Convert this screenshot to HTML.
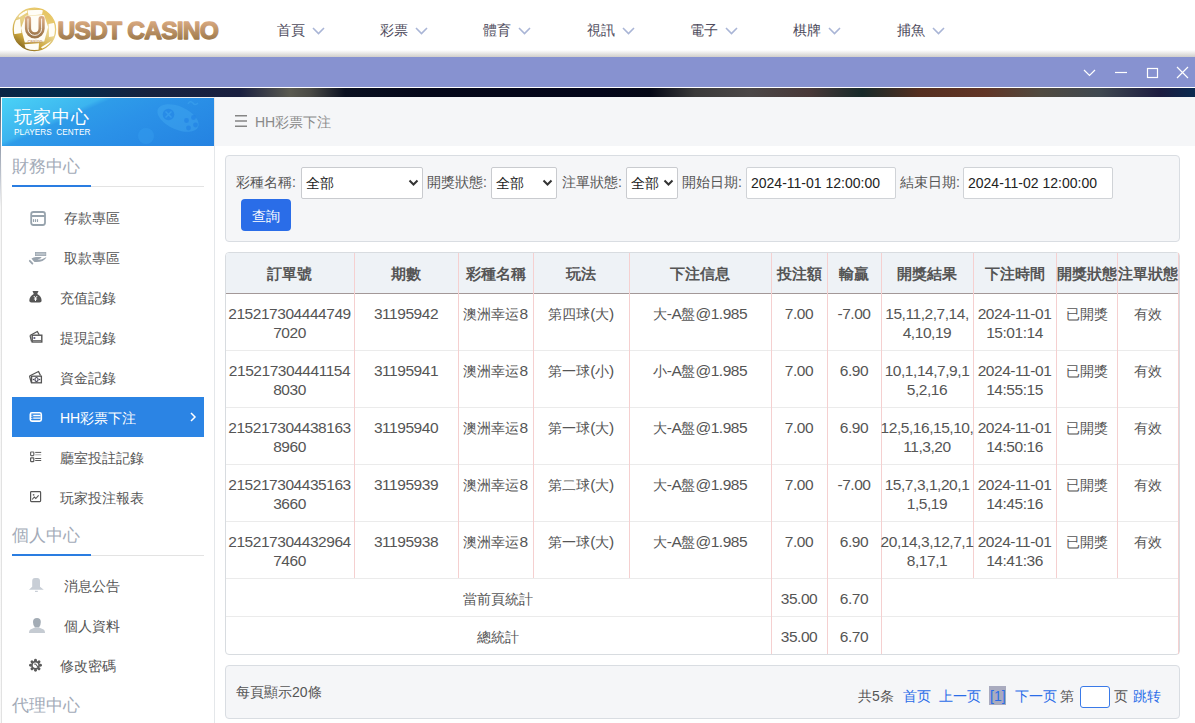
<!DOCTYPE html><html><head><meta charset="utf-8"><style>
*{box-sizing:border-box;margin:0;padding:0}
html,body{width:1195px;height:723px;overflow:hidden;background:#fff;font-family:"Liberation Sans",sans-serif;color:#555}
.abs{position:absolute}
#hdr{position:absolute;left:0;top:0;width:1195px;height:57px;background:linear-gradient(to bottom,#fff 0,#fff 50px,#d0cecb 57px)}
.nav{position:absolute;top:22px;font-size:14px;color:#4e4b5c;line-height:16px;white-space:nowrap}
.nav svg{position:absolute;left:35px;top:5px}
#purple{position:absolute;left:0;top:57px;width:1195px;height:30px;background:#8792d0}
#wline{position:absolute;left:0;top:87px;width:1195px;height:1px;background:#fff}
#dark{position:absolute;left:0;top:88px;width:1195px;height:9px;
 background:linear-gradient(to right,#0b2444 0px,#03294b 60px,#16223f 150px,#1a2040 240px,#5a5a50 290px,#4a4a45 310px,#0a1020 345px,#05081a 420px,#04061a 600px,#050816 650px,#3a3a3a 695px,#4b4747 750px,#483838 810px,#182a2a 862px,#552f20 920px,#613526 985px,#504a40 1040px,#3f4850 1100px,#1c1c40 1160px,#0a2a50 1195px)}
#side{position:absolute;left:1px;top:97px;width:214px;height:626px;background:#fff;border-left:1px solid #e2e2e2;border-right:1px solid #e4e7ea;border-top:1px solid #f0f0f0}
#lcol{position:absolute;left:0;top:97px;width:1px;height:626px;background:linear-gradient(to bottom,#4a5566 0,#8a93a3 40px,#c0c6d0 80px,#f6f6f6 110px,#f8f8f8 100%)}
#lwh{position:absolute;left:1px;top:97px;width:1px;height:103px;background:linear-gradient(to bottom,#fff 0,#fff 60px,#e2e2e2 103px)}
#sideh{position:absolute;left:2px;top:98px;width:212px;height:48px;background:linear-gradient(156deg,#4ad2f6 0%,#3cb4ef 31%,#2e9ce9 35%,#2b92e8 55%,#2482e1 100%);overflow:hidden}
#crumb{position:absolute;left:215px;top:97px;width:980px;height:49px;background:#f5f6f8}
.stitle{position:absolute;left:12px;font-size:17px;color:#a3abb8;line-height:20px;white-space:nowrap}
.sline{position:absolute;left:12px;width:192px;height:1px;background:#e3e3e3}
.sline i{position:absolute;left:0;top:-1px;width:79px;height:2px;background:#2a7de1}
.item{position:absolute;font-size:14px;color:#555;line-height:16px;white-space:nowrap}
.ico{position:absolute}
#active{position:absolute;left:12px;top:397px;width:192px;height:40px;background:#2b84e4}
.box{position:absolute;left:225px;width:955px;background:#f5f6f8;border:1px solid #d9dde2;border-radius:4px}
.lbl{position:absolute;top:174px;font-size:14px;color:#555;line-height:16px;white-space:nowrap}
.sel{position:absolute;top:167px;height:32px;background:#fff;border:1px solid #c9cbcf;border-radius:2px}
.sel span{position:absolute;left:4px;top:7px;font-size:14px;color:#222;line-height:16px}
.sel svg{position:absolute;top:11px}
.inp{position:absolute;top:167px;width:150px;height:32px;background:#fff;border:1px solid #d0d3d7;border-radius:2px;font-size:14px;color:#222;line-height:16px;padding:7px 0 0 4px;white-space:nowrap}
#btn{position:absolute;left:241px;top:199px;width:50px;height:32px;background:#2a6de8;border-radius:4px;color:#fff;font-size:14px;line-height:16px;padding:8.5px 0 0 11px}
#tbl{position:absolute;left:225px;top:252px;width:955px;height:403px;border:1px solid #d8dce0;border-radius:4px;background:#fff;overflow:hidden}
.hl{position:absolute;height:1px}
.vl{position:absolute;width:1px;background:#f5d0d0}
.th{position:absolute;top:265px;font-size:15px;font-weight:bold;color:#555;line-height:17px;text-align:center;white-space:nowrap}
.td{position:absolute;font-size:15.5px;letter-spacing:-0.45px;color:#555;line-height:19px;text-align:center;white-space:nowrap}
.k{font-size:14px;letter-spacing:0}
.pg{position:absolute;top:688px;font-size:14px;line-height:16px;white-space:nowrap;color:#555}
.bl{color:#2a6de8}
</style></head><body>
<div id="hdr"></div>
<svg class="abs" style="left:0;top:0" width="240" height="57" viewBox="0 0 240 57">
<defs><linearGradient id="gold" x1="0.8" y1="0" x2="0.2" y2="1"><stop offset="0" stop-color="#e6c25a"/><stop offset="0.45" stop-color="#e8d28a"/><stop offset="0.75" stop-color="#c9a43c"/><stop offset="1" stop-color="#7a5c1a"/></linearGradient>
<linearGradient id="tan" x1="0" y1="0" x2="0" y2="1"><stop offset="0" stop-color="#d8a982"/><stop offset="1" stop-color="#9e774a"/></linearGradient>
<linearGradient id="tan2" x1="0" y1="22" x2="0" y2="40" gradientUnits="userSpaceOnUse"><stop offset="0" stop-color="#d6a77e"/><stop offset="1" stop-color="#9d794b"/></linearGradient></defs>
<circle cx="34.4" cy="29.4" r="21.2" fill="url(#gold)"/>
<g fill="#fffdf6">
<path d="M27.5 10.2 L43 9.8 L42 14.5 L28.5 15.5 Z"/>
<path d="M18 14.5 L26.8 10.2 L27.3 12.6 L19 17.5 Z"/>
<path d="M13.4 21 L20 19 L21.5 33 L13.8 34.2 Q12.8 27 13.4 21 Z"/>
<path d="M48.5 24 L54.8 22.8 Q56.2 29 55.4 36 L49 37 Z"/>
<path d="M24.5 44.2 L39 43.2 L38.5 50.6 Q32 51.3 26 50 Z"/>
<path d="M41 47.2 L51.8 40.8 L50.5 45 L43 49.6 Z"/>
<path d="M25.8 15.8 L44 15 L48.2 27 L44.2 41.5 L24.8 42.5 L21 28 Z"/>
</g>
<circle cx="34.4" cy="29.4" r="21.2" fill="none" stroke="url(#gold)" stroke-width="1.3"/>
<path d="M28 19 V28.6 a6.8 6.8 0 0 0 13.6 0 V19" fill="none" stroke="url(#tan)" stroke-width="6.2" stroke-linecap="round"/>
<path d="M28 19 V28.6 a6.8 6.8 0 0 0 13.6 0 V19" fill="none" stroke="#fff" stroke-width="1" stroke-linecap="round" opacity="0.9"/>
<text x="27.5" y="43.4" font-family="Liberation Sans" font-size="5.2" fill="#c09068">casino</text>
<text x="57.5" y="38.9" font-family="Liberation Sans" font-weight="bold" font-size="24.6" letter-spacing="-0.8" fill="url(#tan2)" stroke="url(#tan2)" stroke-width="1.3" stroke-linejoin="round">USDT CASINO</text>
</svg>
<div class="nav" style="left:277px">首頁<svg width="13" height="8" viewBox="0 0 13 8"><path d="M1 1 L6.5 6.5 L12 1" fill="none" stroke="#a9b5d6" stroke-width="1.6"/></svg></div>
<div class="nav" style="left:380px">彩票<svg width="13" height="8" viewBox="0 0 13 8"><path d="M1 1 L6.5 6.5 L12 1" fill="none" stroke="#a9b5d6" stroke-width="1.6"/></svg></div>
<div class="nav" style="left:483px">體育<svg width="13" height="8" viewBox="0 0 13 8"><path d="M1 1 L6.5 6.5 L12 1" fill="none" stroke="#a9b5d6" stroke-width="1.6"/></svg></div>
<div class="nav" style="left:587px">視訊<svg width="13" height="8" viewBox="0 0 13 8"><path d="M1 1 L6.5 6.5 L12 1" fill="none" stroke="#a9b5d6" stroke-width="1.6"/></svg></div>
<div class="nav" style="left:690px">電子<svg width="13" height="8" viewBox="0 0 13 8"><path d="M1 1 L6.5 6.5 L12 1" fill="none" stroke="#a9b5d6" stroke-width="1.6"/></svg></div>
<div class="nav" style="left:793px">棋牌<svg width="13" height="8" viewBox="0 0 13 8"><path d="M1 1 L6.5 6.5 L12 1" fill="none" stroke="#a9b5d6" stroke-width="1.6"/></svg></div>
<div class="nav" style="left:897px">捕魚<svg width="13" height="8" viewBox="0 0 13 8"><path d="M1 1 L6.5 6.5 L12 1" fill="none" stroke="#a9b5d6" stroke-width="1.6"/></svg></div>
<div id="purple"></div><div id="wline"></div><div id="dark"></div>
<svg class="abs" style="left:1080px;top:64px" width="115" height="18" viewBox="0 0 115 18">
<path d="M4 6 L9.5 11.5 L15 6" fill="none" stroke="#fff" stroke-width="1.2"/>
<path d="M35 8.5 H47" stroke="#fff" stroke-width="1.2"/>
<rect x="67.5" y="4.5" width="10" height="9" fill="none" stroke="#fff" stroke-width="1.2"/>
<path d="M97 3 L108 14 M108 3 L97 14" stroke="#fff" stroke-width="1.2"/>
</svg>
<div id="side"></div><div id="lcol"></div><div id="lwh"></div>
<div id="crumb"></div>
<div id="sideh">
<svg class="abs" style="left:0;top:0" width="212" height="48" viewBox="0 0 212 48">
<g opacity="0.42"><ellipse cx="176" cy="20" rx="22" ry="11.5" transform="rotate(24 176 20)" fill="#45acf2"/>
<path d="M186 6 Q188 2 191 5 Q193 8 196 5" fill="none" stroke="#45acf2" stroke-width="1.5"/></g>
<circle cx="166.5" cy="16.5" r="5.8" fill="#2284e6" opacity="0.7"/>
<path d="M163.5 13.5 L169.5 19.5 M169.5 13.5 L163.5 19.5" stroke="#3aa0ee" stroke-width="1.5" opacity="0.8"/>
<g fill="#2284e6" opacity="0.7"><circle cx="184.5" cy="22.5" r="2.4"/><circle cx="191.5" cy="19.5" r="2.4"/><circle cx="186.5" cy="30" r="2.4"/><circle cx="193.5" cy="27" r="2.4"/></g>
<circle cx="144" cy="38" r="8" fill="#3aa4f0" opacity="0.35"/>
</svg>
<div class="abs" style="left:12px;top:9px;font-size:18px;color:#fff;line-height:20px;letter-spacing:1px;white-space:nowrap">玩家中心</div>
<div class="abs" style="left:12px;top:29.5px;font-size:8.2px;color:#fff;line-height:9px;word-spacing:2px;letter-spacing:0.1px;white-space:nowrap">PLAYERS CENTER</div>
</div>
<div class="stitle" style="top:157px">財務中心</div><div class="sline" style="top:186px"><i></i></div>
<div class="stitle" style="top:526px">個人中心</div><div class="sline" style="top:555px"><i></i></div>
<div class="stitle" style="top:696px">代理中心</div>
<div id="active"></div>
<div class="item" style="left:64px;top:210px;color:#555">存款專區</div>
<div class="item" style="left:64px;top:250px;color:#555">取款專區</div>
<div class="item" style="left:60px;top:290px;color:#555">充值記錄</div>
<div class="item" style="left:60px;top:330px;color:#555">提現記錄</div>
<div class="item" style="left:60px;top:370px;color:#555">資金記錄</div>
<div class="item" style="left:60px;top:410px;color:#fff">HH彩票下注</div>
<div class="item" style="left:60px;top:450px;color:#555">廳室投註記錄</div>
<div class="item" style="left:60px;top:490px;color:#555">玩家投注報表</div>
<div class="item" style="left:64px;top:578px;color:#555">消息公告</div>
<div class="item" style="left:64px;top:618px;color:#555">個人資料</div>
<div class="item" style="left:60px;top:658px;color:#555">修改密碼</div>
<svg class="ico" style="left:26px;top:207px" width="24" height="24" viewBox="0 0 24 24"><rect x="5.2" y="5" width="13.8" height="13" rx="2.2" fill="none" stroke="#97a3ad" stroke-width="1.8"/><path d="M5 9 H19" stroke="#97a3ad" stroke-width="2"/><path d="M7.5 12.6 V14.4 M9.5 12.6 V14.4 M11.5 12.6 V14.4" stroke="#97a3ad" stroke-width="1.2" stroke-linecap="round"/></svg>
<svg class="ico" style="left:26px;top:247px" width="24" height="24" viewBox="0 0 24 24"><rect x="9.4" y="5.4" width="10.4" height="3.2" fill="#b9c1c8" stroke="#9aa4ae" stroke-width="0.8"/><path d="M5.5 11.5 Q7.5 10 10 10 H15.5 Q15 12 11.5 12.2 Q14 13 16.5 12 L20.5 10 Q19.5 12.8 16.5 14 Q13.5 15.3 8.5 15 L7 13.5 Z" fill="#9aa4ae"/><path d="M3.8 13.8 L6.4 16.6" stroke="#9aa4ae" stroke-width="1.8" stroke-linecap="round"/></svg>
<svg class="ico" style="left:24px;top:286px" width="24" height="24" viewBox="0 0 24 24"><path d="M8.5 5 H14.5 L13.2 8 Q17.5 10 17.6 14.5 Q17.8 16.6 15.5 16.6 H7.5 Q5.2 16.6 5.3 14.5 Q5.5 10 9.8 8 Z" fill="#555"/><path d="M9.8 10 L11.5 12 L13.2 10 M11.5 12 V15 M9.9 13 H13.1" stroke="#fff" stroke-width="1" fill="none"/></svg>
<svg class="ico" style="left:24px;top:325px" width="24" height="24" viewBox="0 0 24 24"><path d="M6 10.5 L13.3 6.5 L15.2 9.8" fill="none" stroke="#555" stroke-width="1.3" stroke-linejoin="round"/><path d="M6 10.5 L7.5 16.5" stroke="#555" stroke-width="1.2"/><rect x="8.2" y="10.2" width="9.6" height="6.8" fill="none" stroke="#555" stroke-width="1.4"/><path d="M9 15.5 H17" stroke="#777" stroke-width="1"/><rect x="9.5" y="12" width="1.8" height="2" fill="#668"/></svg>
<svg class="ico" style="left:24px;top:365px" width="24" height="24" viewBox="0 0 24 24"><path d="M5.5 11 L14.5 6.5 L16.5 10.5" fill="none" stroke="#555" stroke-width="1.3" stroke-linejoin="round"/><path d="M5.5 11 L7.3 17.5" stroke="#555" stroke-width="1.2"/><rect x="7.6" y="11.2" width="9.8" height="6.6" fill="none" stroke="#555" stroke-width="1.3"/><ellipse cx="12.5" cy="14.5" rx="1.6" ry="2" fill="none" stroke="#445" stroke-width="1.2"/><circle cx="9.4" cy="14.5" r="0.7" fill="#445"/><circle cx="15.6" cy="14.5" r="0.7" fill="#445"/></svg>
<svg class="ico" style="left:24px;top:405px" width="24" height="24" viewBox="0 0 24 24"><rect x="6.3" y="7.8" width="11" height="8.3" rx="1.6" fill="none" stroke="#fff" stroke-width="1.6"/><path d="M9.2 10.5 H16.5 M9.2 13.2 H16.5" stroke="#fff" stroke-width="1.3"/><path d="M7.8 9.5 V15" stroke="#e8f0ff" stroke-width="1.2" stroke-dasharray="1 0.8"/></svg>
<svg class="abs" style="left:189.3px;top:412.2px" width="8" height="10" viewBox="0 0 8 10"><path d="M2 1 L6 5 L2 9" fill="none" stroke="#fff" stroke-width="1.5"/></svg>
<svg class="ico" style="left:24px;top:445px" width="24" height="24" viewBox="0 0 24 24"><rect x="6.6" y="7" width="3.2" height="3.6" rx="0.5" fill="none" stroke="#666" stroke-width="1.2"/><rect x="6.6" y="12.8" width="3.2" height="3.8" rx="0.5" fill="none" stroke="#5a5a5a" stroke-width="1.2"/><path d="M11.2 7.4 H17.2 M11.2 13.5 H17.2 M11.2 15.5 H17.2" stroke="#5a5a5a" stroke-width="1"/><path d="M11.2 9.8 H17.2" stroke="#aaa" stroke-width="1"/></svg>
<svg class="ico" style="left:24px;top:485px" width="24" height="24" viewBox="0 0 24 24"><rect x="6.6" y="6.6" width="10" height="10" rx="0.8" fill="none" stroke="#555" stroke-width="1.2"/><path d="M8.2 14.5 L10.3 12 L11.8 13.5 L14.6 10.3" fill="none" stroke="#555" stroke-width="1.1"/><circle cx="9.6" cy="9.8" r="0.9" fill="#666"/></svg>
<svg class="ico" style="left:24px;top:574px" width="26" height="24" viewBox="0 0 26 24"><path d="M8.2 7 Q8.2 4 11 4 H13.2 Q16 4 16 7 V12.8 L19.8 15.8 H5 L8.2 12.8 Z" fill="#c8ced6"/><rect x="11" y="16.8" width="2.8" height="1.2" fill="#c8ced6"/></svg>
<svg class="ico" style="left:24px;top:614px" width="26" height="24" viewBox="0 0 26 24"><path d="M9 8 Q9 4 13 4 Q16.8 4 16.8 8 Q16.8 12 15 13.6 H11 Q9 12 9 8 Z" fill="#a3acb5"/><path d="M5 19 Q5 15.5 7.5 15 L11 13.6 H15 L18.5 15 Q21 15.5 21 19 Z" fill="#c5cbd2"/></svg>
<svg class="ico" style="left:24px;top:654px" width="24" height="24" viewBox="0 0 24 24"><g fill="#5a5a5a"><g id="tth"><circle cx="11.5" cy="6.3" r="1.45"/><circle cx="11.5" cy="16.3" r="1.45"/></g><use href="#tth" transform="rotate(45 11.5 11.3)"/><use href="#tth" transform="rotate(90 11.5 11.3)"/><use href="#tth" transform="rotate(135 11.5 11.3)"/></g><circle cx="11.5" cy="11.3" r="3.6" fill="#fff" stroke="#5a5a5a" stroke-width="1.7"/><path d="M10.2 10.3 Q11.6 9.6 12.3 10.8 L14 13.3" stroke="#5a5a5a" stroke-width="1.1" fill="none"/></svg>
<svg class="abs" style="left:235px;top:114px" width="12" height="13" viewBox="0 0 12 13"><path d="M0 1.7 H12 M0 7 H12 M0 12.2 H12" stroke="#858585" stroke-width="1.6"/></svg>
<div class="abs" style="left:255px;top:114px;font-size:14px;color:#8a8a8a;line-height:16px;white-space:nowrap">HH彩票下注</div>
<div class="box" style="top:155px;height:87px"></div>
<div class="lbl" style="left:236px">彩種名稱:</div>
<div class="sel" style="left:301px;width:122px"><span>全部</span><svg style="left:106px" width="11" height="8" viewBox="0 0 11 8"><path d="M1.5 1.5 L5.5 5.5 L9.5 1.5" fill="none" stroke="#333" stroke-width="2"/></svg></div>
<div class="lbl" style="left:427px">開獎狀態:</div>
<div class="sel" style="left:491px;width:66px"><span>全部</span><svg style="left:50px" width="11" height="8" viewBox="0 0 11 8"><path d="M1.5 1.5 L5.5 5.5 L9.5 1.5" fill="none" stroke="#333" stroke-width="2"/></svg></div>
<div class="lbl" style="left:562px">注單狀態:</div>
<div class="sel" style="left:626px;width:52px"><span>全部</span><svg style="left:36px" width="11" height="8" viewBox="0 0 11 8"><path d="M1.5 1.5 L5.5 5.5 L9.5 1.5" fill="none" stroke="#333" stroke-width="2"/></svg></div>
<div class="lbl" style="left:682px">開始日期:</div>
<div class="inp" style="left:746px">2024-11-01 12:00:00</div>
<div class="lbl" style="left:900px">結束日期:</div>
<div class="inp" style="left:963px">2024-11-02 12:00:00</div>
<div id="btn">查詢</div>
<div id="tbl"></div>
<div class="abs" style="left:226px;top:253px;width:953px;height:40px;background:#eef2f6;border-radius:3px 3px 0 0"></div>
<div class="hl" style="left:226px;top:293px;width:953px;background:#a39898"></div>
<div class="hl" style="left:226px;top:350px;width:952px;background:#ebebeb"></div>
<div class="hl" style="left:226px;top:407px;width:952px;background:#ebebeb"></div>
<div class="hl" style="left:226px;top:464px;width:952px;background:#ebebeb"></div>
<div class="hl" style="left:226px;top:521px;width:952px;background:#ebebeb"></div>
<div class="hl" style="left:226px;top:578px;width:952px;background:#ebebeb"></div>
<div class="hl" style="left:226px;top:616px;width:952px;background:#ebebeb"></div>
<div class="vl" style="left:354px;top:253px;height:325px"></div>
<div class="vl" style="left:458px;top:253px;height:325px"></div>
<div class="vl" style="left:533px;top:253px;height:325px"></div>
<div class="vl" style="left:629px;top:253px;height:325px"></div>
<div class="vl" style="left:771px;top:253px;height:401px"></div>
<div class="vl" style="left:827px;top:253px;height:401px"></div>
<div class="vl" style="left:881px;top:253px;height:401px"></div>
<div class="vl" style="left:973px;top:253px;height:325px"></div>
<div class="vl" style="left:1056px;top:253px;height:325px"></div>
<div class="vl" style="left:1117px;top:253px;height:325px"></div>
<div class="vl" style="left:1178px;top:253px;height:401px"></div>
<div class="th" style="left:215px;width:149px">訂單號</div>
<div class="th" style="left:344px;width:124px">期數</div>
<div class="th" style="left:448px;width:95px">彩種名稱</div>
<div class="th" style="left:523px;width:116px">玩法</div>
<div class="th" style="left:619px;width:162px">下注信息</div>
<div class="th" style="left:761px;width:76px">投注額</div>
<div class="th" style="left:817px;width:74px">輸贏</div>
<div class="th" style="left:871px;width:112px">開獎結果</div>
<div class="th" style="left:963px;width:103px">下注時間</div>
<div class="th" style="left:1046px;width:81px">開獎狀態</div>
<div class="th" style="left:1107px;width:82px">注單狀態</div>
<div class="td" style="left:215px;width:149px;top:304px">215217304444749<br>7020</div>
<div class="td" style="left:344px;width:124px;top:304px">31195942</div>
<div class="td" style="left:448px;width:95px;top:304px"><span class="k">澳洲幸运</span>8</div>
<div class="td" style="left:523px;width:116px;top:304px"><span class="k">第四球</span>(<span class="k">大</span>)</div>
<div class="td" style="left:619px;width:162px;top:304px"><span class="k">大</span>-A<span class="k">盤</span>@1.985</div>
<div class="td" style="left:761px;width:76px;top:304px">7.00</div>
<div class="td" style="left:817px;width:74px;top:304px">-7.00</div>
<div class="td" style="left:871px;width:112px;top:304px">15,11,2,7,14,<br>4,10,19</div>
<div class="td" style="left:963px;width:103px;top:304px">2024-11-01<br>15:01:14</div>
<div class="td" style="left:1046px;width:81px;top:304px"><span class="k">已開獎</span></div>
<div class="td" style="left:1107px;width:82px;top:304px"><span class="k">有效</span></div>
<div class="td" style="left:215px;width:149px;top:361px">215217304441154<br>8030</div>
<div class="td" style="left:344px;width:124px;top:361px">31195941</div>
<div class="td" style="left:448px;width:95px;top:361px"><span class="k">澳洲幸运</span>8</div>
<div class="td" style="left:523px;width:116px;top:361px"><span class="k">第一球</span>(<span class="k">小</span>)</div>
<div class="td" style="left:619px;width:162px;top:361px"><span class="k">小</span>-A<span class="k">盤</span>@1.985</div>
<div class="td" style="left:761px;width:76px;top:361px">7.00</div>
<div class="td" style="left:817px;width:74px;top:361px">6.90</div>
<div class="td" style="left:871px;width:112px;top:361px">10,1,14,7,9,1<br>5,2,16</div>
<div class="td" style="left:963px;width:103px;top:361px">2024-11-01<br>14:55:15</div>
<div class="td" style="left:1046px;width:81px;top:361px"><span class="k">已開獎</span></div>
<div class="td" style="left:1107px;width:82px;top:361px"><span class="k">有效</span></div>
<div class="td" style="left:215px;width:149px;top:418px">215217304438163<br>8960</div>
<div class="td" style="left:344px;width:124px;top:418px">31195940</div>
<div class="td" style="left:448px;width:95px;top:418px"><span class="k">澳洲幸运</span>8</div>
<div class="td" style="left:523px;width:116px;top:418px"><span class="k">第一球</span>(<span class="k">大</span>)</div>
<div class="td" style="left:619px;width:162px;top:418px"><span class="k">大</span>-A<span class="k">盤</span>@1.985</div>
<div class="td" style="left:761px;width:76px;top:418px">7.00</div>
<div class="td" style="left:817px;width:74px;top:418px">6.90</div>
<div class="td" style="left:871px;width:112px;top:418px">12,5,16,15,10,<br>11,3,20</div>
<div class="td" style="left:963px;width:103px;top:418px">2024-11-01<br>14:50:16</div>
<div class="td" style="left:1046px;width:81px;top:418px"><span class="k">已開獎</span></div>
<div class="td" style="left:1107px;width:82px;top:418px"><span class="k">有效</span></div>
<div class="td" style="left:215px;width:149px;top:475px">215217304435163<br>3660</div>
<div class="td" style="left:344px;width:124px;top:475px">31195939</div>
<div class="td" style="left:448px;width:95px;top:475px"><span class="k">澳洲幸运</span>8</div>
<div class="td" style="left:523px;width:116px;top:475px"><span class="k">第二球</span>(<span class="k">大</span>)</div>
<div class="td" style="left:619px;width:162px;top:475px"><span class="k">大</span>-A<span class="k">盤</span>@1.985</div>
<div class="td" style="left:761px;width:76px;top:475px">7.00</div>
<div class="td" style="left:817px;width:74px;top:475px">-7.00</div>
<div class="td" style="left:871px;width:112px;top:475px">15,7,3,1,20,1<br>1,5,19</div>
<div class="td" style="left:963px;width:103px;top:475px">2024-11-01<br>14:45:16</div>
<div class="td" style="left:1046px;width:81px;top:475px"><span class="k">已開獎</span></div>
<div class="td" style="left:1107px;width:82px;top:475px"><span class="k">有效</span></div>
<div class="td" style="left:215px;width:149px;top:532px">215217304432964<br>7460</div>
<div class="td" style="left:344px;width:124px;top:532px">31195938</div>
<div class="td" style="left:448px;width:95px;top:532px"><span class="k">澳洲幸运</span>8</div>
<div class="td" style="left:523px;width:116px;top:532px"><span class="k">第一球</span>(<span class="k">大</span>)</div>
<div class="td" style="left:619px;width:162px;top:532px"><span class="k">大</span>-A<span class="k">盤</span>@1.985</div>
<div class="td" style="left:761px;width:76px;top:532px">7.00</div>
<div class="td" style="left:817px;width:74px;top:532px">6.90</div>
<div class="td" style="left:871px;width:112px;top:532px">20,14,3,12,7,1<br>8,17,1</div>
<div class="td" style="left:963px;width:103px;top:532px">2024-11-01<br>14:41:36</div>
<div class="td" style="left:1046px;width:81px;top:532px"><span class="k">已開獎</span></div>
<div class="td" style="left:1107px;width:82px;top:532px"><span class="k">有效</span></div>
<div class="td" style="left:225px;width:546px;top:589px"><span class="k">當前頁統計</span></div>
<div class="td" style="left:771px;width:56px;top:589px">35.00</div><div class="td" style="left:827px;width:54px;top:589px">6.70</div>
<div class="td" style="left:225px;width:546px;top:627px"><span class="k">總統計</span></div>
<div class="td" style="left:771px;width:56px;top:627px">35.00</div><div class="td" style="left:827px;width:54px;top:627px">6.70</div>
<div class="box" style="top:665px;height:54px"></div>
<div class="pg" style="left:236px;top:684px">每頁顯示20條</div>
<div class="pg" style="left:858px">共5条</div>
<div class="pg bl" style="left:903px">首页</div>
<div class="pg bl" style="left:939px">上一页</div>
<div class="abs" style="left:989px;top:686px;width:17px;height:19px;background:#a9abbf"></div>
<div class="pg bl" style="left:990px">[1]</div>
<div class="pg bl" style="left:1015px">下一页</div>
<div class="pg" style="left:1060px">第</div>
<div class="abs" style="left:1080px;top:686px;width:30px;height:22px;background:#fff;border:1px solid #3a7ae8;border-radius:3px"></div>
<div class="pg" style="left:1114px">页</div>
<div class="pg bl" style="left:1133px">跳转</div>
</body></html>
